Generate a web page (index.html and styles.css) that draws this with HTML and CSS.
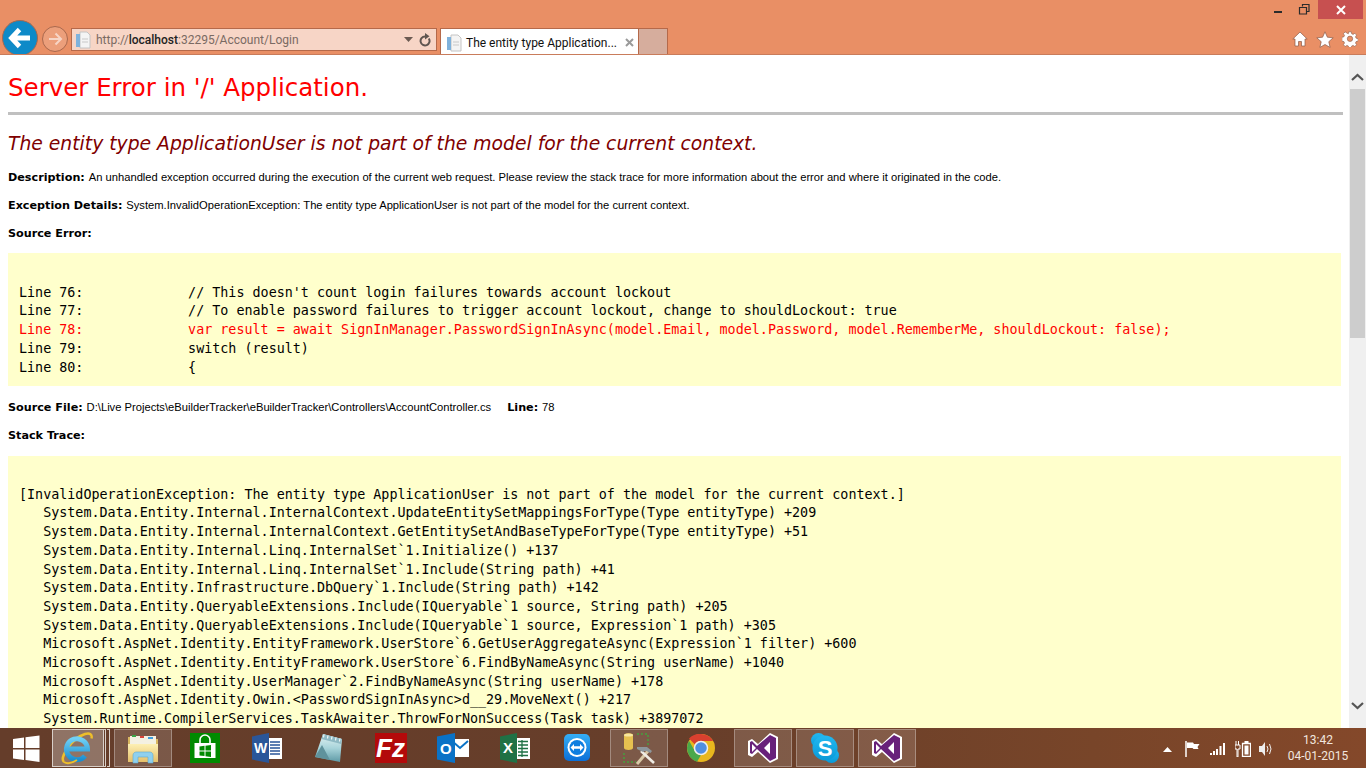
FILE: index.html
```html
<!DOCTYPE html>
<html lang="en">
<head>
<meta charset="utf-8">
<title>Server Error</title>
<link rel="stylesheet" href="styles.css">
</head>
<body>
<svg class="defs" width="0" height="0">
  <defs>
    <linearGradient id="glass" x1="0" y1="0" x2="0" y2="1"><stop offset="0" stop-color="#e4f3f3"/><stop offset=".5" stop-color="#a8d4da"/><stop offset="1" stop-color="#5f9aa6"/></linearGradient>
    <linearGradient id="ieblue" x1="0" y1="0" x2="0" y2="1"><stop offset="0" stop-color="#6fd0f5"/><stop offset="1" stop-color="#1b8fd0"/></linearGradient>
    <linearGradient id="folder" x1="0" y1="0" x2="0" y2="1"><stop offset="0" stop-color="#fdf0b4"/><stop offset="1" stop-color="#e6c06a"/></linearGradient>
    <linearGradient id="tv" x1="0" y1="0" x2="0" y2="1"><stop offset="0" stop-color="#35aef5"/><stop offset="1" stop-color="#0a6fd8"/></linearGradient>
    <linearGradient id="skyp" x1="0" y1="0" x2="0" y2="1"><stop offset="0" stop-color="#22b8f0"/><stop offset="1" stop-color="#0a9ad8"/></linearGradient>
  </defs>
</svg>
<div class="screen">
  <header class="chrome">
    <div class="winrow">
      <svg class="wbtn" width="34" height="19" viewBox="0 0 34 19"><rect x="20" y="11" width="8" height="2" fill="#2b2b2b"/></svg>
      <svg class="wbtn" width="30" height="19" viewBox="0 0 30 19"><path d="M11.500 7.500h7v6.500h-7zM14.500 6.500v-2h6.500v7h-2" fill="none" stroke="#2b2b2b" stroke-width="1.200"/></svg>
      <div class="close"><svg width="10" height="10" viewBox="0 0 10 10"><path d="M1 1l8 8M9 1l-8 8" stroke="#fff" stroke-width="2"/></svg></div>
    </div>
    <div class="navrow">
      <div class="back"><svg width="24" height="22" viewBox="0 0 24 22"><path d="M11.500 2.500L3.500 11l8 8.500M4 11H22" fill="none" stroke="#fff" stroke-width="4.800"/></svg></div>
      <div class="forward"><svg width="16" height="14" viewBox="0 0 16 14"><path d="M8.500 1.500L14 7l-5.500 5.500M14 7H2" fill="none" stroke="#f7d5c6" stroke-width="2"/></svg></div>
      <div class="address">
        <svg class="pageicon" width="16" height="18" viewBox="0 0 16 18"><path d="M5 1h7l3 3v13H5z" fill="#f4f4f4" stroke="#c4c4c4"/><path d="M1 3h4v13H1z" fill="#7fb2dc"/><path d="M7 8h6M7 11h6" stroke="#c8c8c8"/></svg>
        <span class="url">http://<b>localhost</b>:32295/Account/Login</span>
        <svg class="caret" width="9" height="5" viewBox="0 0 9 5"><path d="M0 0h9L4.500 5z" fill="#6b5a52"/></svg>
        <svg class="refresh" width="12" height="14" viewBox="0 0 12 14"><path d="M9.800 5.500A4.500 4.500 0 1 1 6 3.500" fill="none" stroke="#5f5550" stroke-width="2"/><path d="M6 0l4.500 3.300L6 6.500z" fill="#5f5550"/></svg>
      </div>
      <div class="tab">
        <svg class="pageicon" width="16" height="18" viewBox="0 0 16 18"><path d="M5 1h7l3 3v13H5z" fill="#f4f4f4" stroke="#c4c4c4"/><path d="M1 3h4v13H1z" fill="#7fb2dc"/><path d="M7 8h6M7 11h6" stroke="#c8c8c8"/></svg>
        <span class="tabtitle">The entity type Application...</span>
        <svg class="tabx" width="9" height="9" viewBox="0 0 9 9"><path d="M1 1l7 7M8 1L1 8" stroke="#9a9a9a" stroke-width="2"/></svg>
      </div>
      <div class="newtab"></div>
      <div class="tools">
        <svg width="16" height="16" viewBox="0 0 16 16"><path d="M8 1L.800 8H3v7h3.500v-4.500h3V15H13V8h2.200z" fill="#fff" stroke="#8a5a48" stroke-width=".7"/></svg>
        <svg width="18" height="17" viewBox="0 0 18 17"><path d="M9 .8l2.400 5.400 5.800.6-4.400 3.900 1.300 5.700L9 13.500l-5.100 2.900 1.300-5.700L.8 6.800l5.800-.6z" fill="#fff" stroke="#8a5a48" stroke-width=".7"/></svg>
        <svg width="16" height="16" viewBox="0 0 16 16"><path d="M6.700 1h2.600l.4 2 1.400.6 1.700-1.100 1.800 1.800-1.100 1.700.6 1.400 2 .4v2.600l-2 .4-.6 1.400 1.100 1.700-1.800 1.800-1.700-1.100-1.400.6-.4 2H6.700l-.4-2-1.400-.6-1.700 1.100-1.800-1.800 1.100-1.700-.6-1.400-2-.4V6.400l2-.4.6-1.400-1.100-1.700 1.800-1.800 1.700 1.100L6.300 3z" transform="translate(0 -.2)" fill="#fff" stroke="#8a5a48" stroke-width=".6"/><circle cx="8" cy="7.800" r="2.700" fill="#e98f65" stroke="#8a5a48" stroke-width=".6"/></svg>
      </div>
    </div>
  </header>

  <div class="viewport">
    <main class="page">
      <h1 class="title">Server Error in '/' Application.</h1>
      <hr class="rule">
      <h2 class="subtitle">The entity type ApplicationUser is not part of the model for the current context.</h2>
      <p class="info"><b>Description: </b>An unhandled exception occurred during the execution of the current web request. Please review the stack trace for more information about the error and where it originated in the code.</p>
      <p class="info"><b>Exception Details: </b>System.InvalidOperationException: The entity type ApplicationUser is not part of the model for the current context.</p>
      <p class="info"><b>Source Error:</b></p>
      <pre class="code source">

Line 76:             // This doesn't count login failures towards account lockout
Line 77:             // To enable password failures to trigger account lockout, change to shouldLockout: true
<span class="hot">Line 78:             var result = await SignInManager.PasswordSignInAsync(model.Email, model.Password, model.RememberMe, shouldLockout: false);</span>
Line 79:             switch (result)
Line 80:             {</pre>
      <p class="info after-source"><b>Source File: </b>D:\Live Projects\eBuilderTracker\eBuilderTracker\Controllers\AccountController.cs<b class="linelabel">Line: </b>78</p>
      <p class="info"><b>Stack Trace:</b></p>
      <pre class="code stack">

[InvalidOperationException: The entity type ApplicationUser is not part of the model for the current context.]
   System.Data.Entity.Internal.InternalContext.UpdateEntitySetMappingsForType(Type entityType) +209
   System.Data.Entity.Internal.InternalContext.GetEntitySetAndBaseTypeForType(Type entityType) +51
   System.Data.Entity.Internal.Linq.InternalSet`1.Initialize() +137
   System.Data.Entity.Internal.Linq.InternalSet`1.Include(String path) +41
   System.Data.Entity.Infrastructure.DbQuery`1.Include(String path) +142
   System.Data.Entity.QueryableExtensions.Include(IQueryable`1 source, String path) +205
   System.Data.Entity.QueryableExtensions.Include(IQueryable`1 source, Expression`1 path) +305
   Microsoft.AspNet.Identity.EntityFramework.UserStore`6.GetUserAggregateAsync(Expression`1 filter) +600
   Microsoft.AspNet.Identity.EntityFramework.UserStore`6.FindByNameAsync(String userName) +1040
   Microsoft.AspNet.Identity.UserManager`2.FindByNameAsync(String userName) +178
   Microsoft.AspNet.Identity.Owin.&lt;PasswordSignInAsync&gt;d__29.MoveNext() +217
   System.Runtime.CompilerServices.TaskAwaiter.ThrowForNonSuccess(Task task) +3897072</pre>
    </main>
    <div class="scrollbar">
      <svg class="arrow up" width="17" height="17" viewBox="0 0 17 17"><path d="M3 11l5.500-5 5.500 5" fill="none" stroke="#555" stroke-width="2.200"/></svg>
      <div class="thumb"></div>
      <div class="track"></div>
      <svg class="arrow down" width="17" height="17" viewBox="0 0 17 17"><path d="M3 6l5.500 5 5.500-5" fill="none" stroke="#555" stroke-width="2.200"/></svg>
    </div>
  </div>

  <footer class="taskbar">
    <div class="start"><svg width="27" height="27" viewBox="0 0 27 27"><path d="M0 4l11-1.500V13H0zM12.500 2.300L26.500.5V13h-14zM0 14.500h11V25L0 23.500zM12.500 14.500h14V27l-14-1.900z" fill="#fff"/></svg></div>
    <div class="tb tb-ie active">
      <svg width="32" height="34" viewBox="0 0 32 34"><path d="M3 31C-2 27 11 7 24 3c5-1.500 7.500.5 6.500 4.500" fill="none" stroke="#eebf2a" stroke-width="2.400"/><path d="M7 18H26.500A10.500 10.500 0 1 0 24 25" fill="none" stroke="url(#ieblue)" stroke-width="5"/><path d="M3 31c3 2 8 1 13-2" fill="none" stroke="#eebf2a" stroke-width="2"/></svg>
      <i class="stack1"></i><i class="stack2"></i>
    </div>
    <div class="tb open">
      <svg width="32" height="32" viewBox="0 0 32 32"><path d="M1 5h9l2 2h19v22H1z" fill="#d9b760"/><path d="M3 4h26v8H3z" fill="#f4f1e2"/><path d="M5 3h4v2H5z" fill="#3aa648"/><path d="M13 4h4v2h-4z" fill="#d8443a"/><path d="M21 5h5v2h-5z" fill="#3f9fdc"/><path d="M1 12h30v18H1z" fill="url(#folder)"/><path d="M6 31v-8c0-2 2-3 3-3h14c1 0 3 1 3 3v8h-5v-6H11v6z" fill="#8fd0ee" stroke="#5fa9cc" stroke-width=".6"/></svg>
    </div>
    <div class="tb">
      <svg width="30" height="30" viewBox="0 0 30 30"><rect width="30" height="30" fill="#008a00"/><path d="M4.500 10h21v15h-21z" fill="#fff"/><path d="M10 10V7a5 5 0 0 1 10 0v3" fill="none" stroke="#fff" stroke-width="1.600"/><path d="M9.500 13.500l5-.7v4.700h-5zM15.500 12.700l5.500-.7v5.500h-5.500zM9.500 18.500h5v4.500l-5-.6zM15.500 18.500H21V24l-5.500-.8z" fill="#008a00"/></svg>
    </div>
    <div class="tb">
      <svg width="30" height="30" viewBox="0 0 30 30"><path d="M11 5h19v21H11z" fill="#fff"/><path d="M18 9h10M18 12h10M18 15h10M18 18h10M18 21h10" stroke="#2a5699" stroke-width="1.400"/><path d="M0 3.500L17 0v30L0 26.500z" fill="#2a5699"/><text x="2" y="20" class="iconletter word">W</text></svg>
    </div>
    <div class="tb">
      <svg width="30" height="32" viewBox="0 0 30 32"><path d="M9 2l19 5-2 23L1 25z" fill="url(#glass)"/><path d="M9 2l19 5-1 5L7.500 7z" fill="#8fbac4"/><path d="M10 2.500l-.5 3M14 3.500l-.5 3M18 4.500l-.5 3M22 5.500l-.5 3M26 6.500l-.5 3" stroke="#f2f7f7" stroke-width="1.200"/><path d="M1 25l7-12 8 15z" fill="#5f929c"/></svg>
    </div>
    <div class="tb">
      <svg width="32" height="30" viewBox="0 0 32 30"><rect width="32" height="30" fill="#b30a0a"/><text x="15.500" y="24" class="iconletter zilla">Fz</text></svg>
    </div>
    <div class="tb">
      <svg width="32" height="30" viewBox="0 0 32 30"><path d="M14 6h18v18H14z" fill="#fff"/><path d="M15 8l8 7 8-7" fill="none" stroke="#0a72c6" stroke-width="2"/><path d="M0 3.500L18 0v30L0 26.500z" fill="#0a72c6"/><text x="8.800" y="20.500" class="iconletter outlook">O</text></svg>
    </div>
    <div class="tb">
      <svg width="30" height="30" viewBox="0 0 30 30"><path d="M15 5h15v21H15z" fill="#fff"/><path d="M18 8.500h10M18 12h10M18 15.500h10M18 19h10M18 22.500h10M22 7v17" stroke="#1f7145" stroke-width="1.300"/><path d="M0 3.500L17 0v30L0 26.500z" fill="#1f7145"/><text x="8" y="20" class="iconletter excel">X</text></svg>
    </div>
    <div class="tb">
      <svg width="28" height="30" viewBox="0 0 28 30"><rect width="26" height="27" x="1" y="1" rx="5" fill="url(#tv)"/><circle cx="14" cy="14.500" r="9.500" fill="#fff"/><circle cx="14" cy="14.500" r="7.500" fill="#0e7ee0"/><path d="M7.500 14.500l3.500-3.500v2.300h6V11l3.500 3.500-3.500 3.500v-2.300h-6V18z" fill="#fff"/></svg>
    </div>
    <div class="tb open">
      <svg width="34" height="35" viewBox="0 0 34 35"><path d="M2 4c0-2.500 9-2.500 9 0v13c0 2.500-9 2.500-9 0z" fill="#e6c050"/><ellipse cx="6.500" cy="4" rx="4.500" ry="1.600" fill="#f7e6a0"/><path d="M15 3h11v12" fill="none" stroke="#46a03c" stroke-width="1.500" stroke-dasharray="2 2"/><path d="M2 22v9h12" fill="none" stroke="#46a03c" stroke-width="1.500" stroke-dasharray="2 2"/><path d="M15 33l11-13" stroke="#d9c9a8" stroke-width="3"/><path d="M19 20l13 12" stroke="#f0ece4" stroke-width="2.600"/><path d="M15 16h10l5 4-1.500 2-4-2h-2l-1.500 1-6-3z" fill="#8d969b"/></svg>
    </div>
    <div class="tb">
      <svg width="30" height="30" viewBox="0 0 30 30"><circle cx="15" cy="15" r="14" fill="#e8b71e"/><path d="M15 1a14 14 0 0 1 12.100 7H15a7 7 0 0 0-6.100 3.500L3 5.500A14 14 0 0 1 15 1z" fill="#d9402f"/><path d="M1 15A14 14 0 0 1 3 7.800l6 10.400A7 7 0 0 0 15 22l-4 6.700A14 14 0 0 1 1 15z" fill="#4aa84a"/><circle cx="15" cy="15" r="6.500" fill="#4f8fe0" stroke="#eee" stroke-width="1.500"/></svg>
    </div>
    <div class="tb open">
      <svg width="32" height="32" viewBox="0 0 32 32"><path d="M23 1l8 4v22l-8 4-12-11-6 5-4-2V9l4-2 6 5z" fill="#fff"/><path d="M23 3l6 3v20l-6 3-13-12-5 5-2-1V10l2-1 5 5zM23 10l-6 6 6 6z" fill="#68217a" fill-rule="evenodd"/><path d="M5 12v8l4-4z" fill="#fff"/></svg>
    </div>
    <div class="tb open">
      <svg width="30" height="32" viewBox="0 0 30 32"><circle cx="8.500" cy="8.500" r="7.500" fill="url(#skyp)"/><circle cx="21.500" cy="23.500" r="7.500" fill="url(#skyp)"/><circle cx="15" cy="16" r="12.500" fill="url(#skyp)"/><text x="15" y="24" class="iconletter skype">S</text></svg>
    </div>
    <div class="tb open">
      <svg width="32" height="32" viewBox="0 0 32 32"><path d="M23 1l8 4v22l-8 4-12-11-6 5-4-2V9l4-2 6 5z" fill="#fff"/><path d="M23 3l6 3v20l-6 3-13-12-5 5-2-1V10l2-1 5 5zM23 10l-6 6 6 6z" fill="#68217a" fill-rule="evenodd"/><path d="M5 12v8l4-4z" fill="#fff"/></svg>
    </div>
    <div class="tray">
      <svg class="traycaret" width="9" height="5" viewBox="0 0 9 5"><path d="M4.500 0L9 5H0z" fill="#fff"/></svg>
      <svg width="15" height="16" viewBox="0 0 15 16"><path d="M1 0v16" stroke="#fff" stroke-width="1.500"/><path d="M2 1.500h6l1 1.500h5.500l-2 3 1 2H8.500L7.500 7H2z" fill="#fff"/></svg>
      <svg width="15" height="12" viewBox="0 0 15 12"><path d="M0 10h2v2H0zM3 8h2v4H3zM6 6h2v6H6zM9.500 3h2v9h-2zM13 0h2v12h-2z" fill="#fff"/></svg>
      <svg width="16" height="16" viewBox="0 0 16 16"><path d="M1 0v4M3.500 0v4M0 4h5v4H3v8H2V8H0z" fill="none" stroke="#fff"/><path d="M7.500 2.500h8v13h-8z" fill="none" stroke="#fff" stroke-width="1.300"/><path d="M9.500 0h4v2h-4zM9.500 4.500h4v9h-4z" fill="#fff"/></svg>
      <svg class="speaker" width="13" height="14" viewBox="0 0 13 14"><path d="M0 4h3l3-4v14l-3-4H0z" fill="#eee"/><path d="M8 4q2 3 0 6M10.500 2q3 5 0 10" fill="none" stroke="#eee"/></svg>
    </div>
    <div class="clock"><span>13:42</span><span>04-01-2015</span></div>
  </footer>
</div>
</body>
</html>
```
FILE: styles.css
```css
* { box-sizing: border-box; }
html, body { margin: 0; height: 100%; overflow: hidden; }
.defs { position: absolute; }
.screen { width: 1366px; height: 768px; display: flex; flex-direction: column; background: #fff; }

/* Browser chrome */
.chrome { height: 55px; flex: none; background: #e98f65; border-bottom: 1px solid #c97c5b; overflow: hidden; }
.winrow { height: 21px; display: flex; justify-content: flex-end; align-items: flex-start; padding-right: 3px; }
.close { width: 45px; height: 19px; background: #c75050; display: flex; align-items: center; justify-content: center; }
.navrow { height: 34px; display: flex; align-items: flex-start; padding-left: 2px; }
.back { width: 36px; height: 36px; margin: -1px -1px 0 0; border-radius: 50%; background: #0e8ac8; border: 1px solid #a9684d; display: flex; align-items: center; justify-content: center; flex: none; }
.forward { width: 26px; height: 26px; margin: 5px 0 0 5px; border-radius: 50%; border: 1px solid #a9684d; background: #ec9f7b; display: flex; align-items: center; justify-content: center; flex: none; }
.address { width: 366px; height: 23px; margin: 7px 0 0 3px; background: #f7d5c6; border: 1px solid #b5694a; display: flex; align-items: center; padding: 0 5px 0 3px; flex: none; font: 12px Roboto, sans-serif; color: #7a6a63; }
.url { margin-left: 5px; flex: 1; }
.url b { font-weight: 500; color: #222; }
.caret { margin-right: 6px; }
.tab { width: 199px; height: 28px; margin: 7px 0 0 3px; background: #fff; border: 1px solid #b5694a; border-bottom: 0; display: flex; align-items: center; padding: 0 4px 0 5px; flex: none; font: 12px Roboto, sans-serif; color: #111; }
.tabtitle { margin-left: 4px; flex: 1; white-space: nowrap; }
.newtab { width: 29px; height: 27px; margin-top: 7px; background: #d6ad9d; border: 1px solid #b5694a; border-left: 0; border-bottom: 0; flex: none; }
.tools { margin-left: auto; display: flex; gap: 8px; align-items: center; height: 20px; margin-top: 8px; padding-right: 8px; }

/* Viewport */
.viewport { flex: 1; min-height: 0; display: flex; overflow: hidden; }
.page { width: 1349px; flex: none; padding: 0 6px 0 8px; overflow: hidden; font: 11.2px "Liberation Sans", Arial, sans-serif; color: #000; }
.title { margin: 18px 0 0; font: 400 24.5px/30px "DejaVu Sans", Verdana, sans-serif; color: #f00; }
.rule { height: 3px; margin: 9px 0 0; border: 0; background: #c0c0c0; }
.subtitle { margin: 16px 0 0; font: italic 400 18.75px/26px "DejaVu Sans", Verdana, sans-serif; color: #800000; }
.info { margin: 12px 0 0; height: 16px; line-height: 16px; white-space: nowrap; }
.after-source { margin-top: 13px; }
.info b { font-family: "DejaVu Sans", Verdana, sans-serif; font-weight: 700; }
.linelabel { margin-left: 16px; }
.code { margin: 13px 2px 0 0; padding: 11px 0 10px 11px; background: #ffffcc; font: 13.39px/18.7px "DejaVu Sans Mono", monospace; color: #000; overflow: hidden; }
.source { height: 133px; margin-top: 12px; padding-top: 12px; padding-bottom: 0; }
.stack { padding-top: 11px; padding-bottom: 0; }
.hot { color: #f00; }

.scrollbar { width: 17px; flex: none; background: #f0f0f0; display: flex; flex-direction: column; }
.arrow { flex: none; }
.up { margin: 14px 0 3px; }
.down { margin: 3px 0 14px; }
.thumb { height: 249px; margin: 0 1px; background: #cdcdcd; flex: none; }
.track { flex: 1; }

/* Taskbar */
.taskbar { height: 40px; flex: none; display: flex; align-items: center; background: linear-gradient(90deg, #653d2a 0%, #673e2a 50%, #784529 80%, #84482a 100%); }
.start { width: 52px; height: 40px; display: flex; align-items: center; justify-content: center; flex: none; }
.tb { width: 62px; height: 38px; flex: none; display: flex; align-items: center; justify-content: center; position: relative; }
.tb.open::before { content: ""; position: absolute; top: 0; bottom: 0; left: 2px; right: 2px; background: rgba(255,255,255,.14); border: 1px solid rgba(255,255,255,.3); }
.tb svg { position: relative; }
.tb-ie { width: 60px; }
.tb-ie::before { content: ""; position: absolute; top: 0; bottom: 0; left: 0; width: 50px; background: rgba(255,255,255,.28); border: 1px solid #d8cfc8; }
.tb-ie svg { margin-right: 10px; }
.stack1, .stack2 { position: absolute; top: 0; bottom: 0; width: 3px; border: 1px solid #d8cfc8; border-left: 0; }
.stack1 { left: 51px; }
.stack2 { left: 55px; }
.iconletter { font-family: "Liberation Sans", sans-serif; font-weight: 700; fill: #fff; }
.word { font-size: 14px; }
.skype { font-size: 22px; text-anchor: middle; }
.zilla { font-size: 26px; font-style: italic; text-anchor: middle; }
.outlook { font-size: 15px; text-anchor: middle; }
.excel { font-size: 15px; text-anchor: middle; }
.tray { margin-left: 245px; padding-top: 2px; display: flex; align-items: center; gap: 10px; flex: none; }
.traycaret { margin-right: 3px; }
.speaker { margin-left: -2px; }
.clock { width: 80px; display: flex; flex-direction: column; align-items: center; flex: none; font: 12px/16px Roboto, sans-serif; color: #f1e6df; margin-left: auto; padding-right: 16px; }
```
